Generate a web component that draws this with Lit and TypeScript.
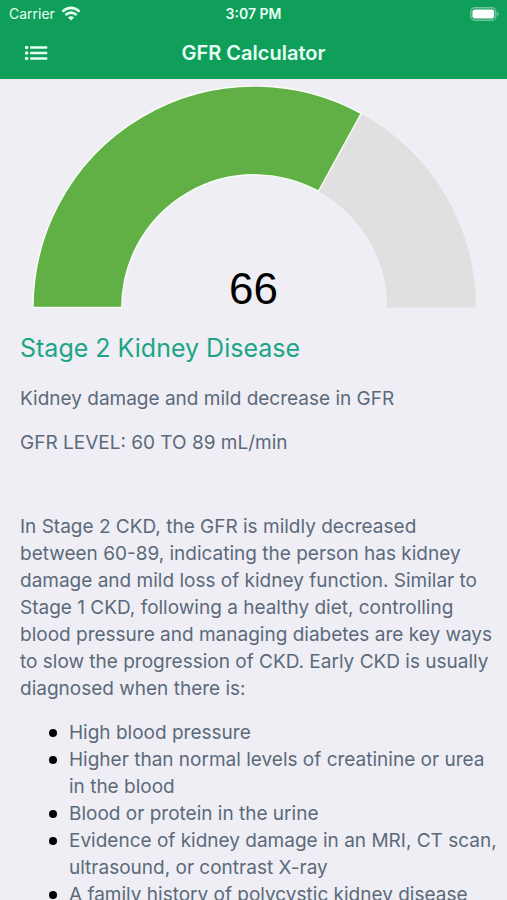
import { LitElement, html, css, svg } from "lit";
import { customElement, property } from "lit/decorators.js";

@customElement("status-bar")
class StatusBar extends LitElement {
  static styles = css`
    :host { display: grid; grid-template-columns: 1fr auto 1fr; align-items: center; height: 27px; padding: 0 8px; color: #e6fff2; font-size: 14px; }
    .carrier { display: flex; align-items: center; gap: 6px; padding-left: 1px; }
    .time { font-weight: 600; }
    .battery { justify-self: end; display: block; }
  `;
  render() {
    return html`
      <span class="carrier">Carrier
        <svg width="20" height="15" viewBox="0 0 20 15" aria-hidden="true">
          <g fill="none" stroke="#e6fff2" stroke-width="2.6">
            <path d="M1.4 5.6 Q10 -2 18.6 5.6" /><path d="M4.4 9 Q10 4.2 15.6 9" />
          </g>
          <path d="M10 14.4 L7 11.4 Q10 9 13 11.4 Z" fill="#e6fff2" />
        </svg>
      </span>
      <span class="time">3:07 PM</span>
      <svg class="battery" width="29" height="14" viewBox="0 0 29 14" aria-hidden="true">
        <rect x="0.8" y="0.8" width="25" height="12.4" rx="4" fill="none" stroke="#fff" stroke-opacity=".4" stroke-width="1.4" />
        <rect x="2.4" y="2.4" width="21.8" height="9.2" rx="2.4" fill="#fff" />
        <path d="M27.2 5 Q30 7 27.2 9 Z" fill="#fff" fill-opacity=".5" />
      </svg>
    `;
  }
}

@customElement("gfr-gauge")
class GfrGauge extends LitElement {
  @property({ type: Number }) value = 66;
  @property({ type: Number }) max = 100;
  static styles = css`
    :host { display: block; }
    svg { display: block; width: 100%; height: auto; }
    text { font-family: "Liberation Sans", Arial, sans-serif; font-size: 44px; text-anchor: middle; fill: #000; }
    .done { fill: #61b045; stroke: #f8fff6; stroke-width: 1.4; }
    .rest { fill: #e0e0e0; }
  `;
  private slice(from: number, to: number, cls: string) {
    const p = (r: number, t: number) => {
      const a = Math.PI * (1 - t);
      return `${223 + r * Math.cos(a)} ${222 - r * Math.sin(a)}`;
    };
    return svg`<path class="${cls}" d="M${p(222, from)} A222 222 0 0 1 ${p(222, to)} L${p(133, to)} A133 133 0 0 0 ${p(133, from)} Z" />`;
  }
  render() {
    const t = this.value / this.max;
    return html`<svg viewBox="0 0 446 228" role="img" aria-label="GFR gauge">
      ${this.slice(t, 1, "rest")}${this.slice(0, t, "done")}
      <text x="222" y="218">${this.value}</text>
    </svg>`;
  }
}

@customElement("app-root")
class AppRoot extends LitElement {
  static styles = css`
    :host { display: block; min-height: 100vh; background: #efeef4; font-family: Inter, "Liberation Sans", sans-serif; color: #5b6a7b; }
    .top { background: #0f9f5b; }
    .nav { display: grid; grid-template-columns: 48px 1fr 48px; align-items: center; height: 52px; padding: 0 12px; }
    .menu { display: grid; place-items: center; width: 48px; height: 44px; padding: 0; border: 0; background: none; cursor: pointer; }
    .title { margin: 0; color: #e6fff2; font-size: 20px; font-weight: 600; text-align: center; }
    .gauge { padding: 7px 30px 0 32px; }
    .content { padding: 0 8px 0 20px; font-size: 19px; line-height: 27px; }
    h2 { margin: 18px 0 0; color: #1ca587; font-size: 25px; font-weight: 400; line-height: 34px; }
    p { margin: 20px 0 0; }
    p + p { margin-top: 17px; }
    p.details { margin-top: 57px; padding-right: 6px; }
    ul { margin: 17px 0 0; padding: 0 0 0 29px; list-style: none; }
    li { display: flex; gap: 12px; }
    li::before { content: ""; flex: none; width: 8px; height: 8px; margin-top: 10px; border-radius: 50%; background: #000; }
  `;
  private items = [
    "High blood pressure",
    "Higher than normal levels of creatinine or urea in the blood",
    "Blood or protein in the urine",
    "Evidence of kidney damage in an MRI, CT scan, ultrasound, or contrast X-ray",
    "A family history of polycystic kidney disease",
  ];
  render() {
    return html`
      <header class="top">
        <status-bar></status-bar>
        <div class="nav">
          <button class="menu" aria-label="Menu">
            <svg width="24" height="16" viewBox="0 0 24 16" fill="#e6fff2" aria-hidden="true">
              <circle cx="2.6" cy="2.5" r="1.8" /><circle cx="2.6" cy="8" r="1.8" /><circle cx="2.6" cy="13.5" r="1.8" />
              <rect x="6" y="1.2" width="17.4" height="2.6" rx="1" /><rect x="6" y="6.7" width="17.4" height="2.6" rx="1" /><rect x="6" y="12.2" width="17.4" height="2.6" rx="1" />
            </svg>
          </button>
          <h1 class="title">GFR Calculator</h1>
        </div>
      </header>
      <main>
        <gfr-gauge class="gauge" value="66"></gfr-gauge>
        <section class="content">
          <h2>Stage 2 Kidney Disease</h2>
          <p>Kidney damage and mild decrease in GFR</p>
          <p>GFR LEVEL: 60 TO 89 mL/min</p>
          <p class="details">In Stage 2 CKD, the GFR is mildly decreased between 60-89, indicating the person has kidney damage and mild loss of kidney function. Similar to Stage 1 CKD, following a healthy diet, controlling blood pressure and managing diabetes are key ways to slow the progression of CKD. Early CKD is usually diagnosed when there is:</p>
          <ul>${this.items.map((item) => html`<li><span>${item}</span></li>`)}</ul>
        </section>
      </main>
    `;
  }
}
